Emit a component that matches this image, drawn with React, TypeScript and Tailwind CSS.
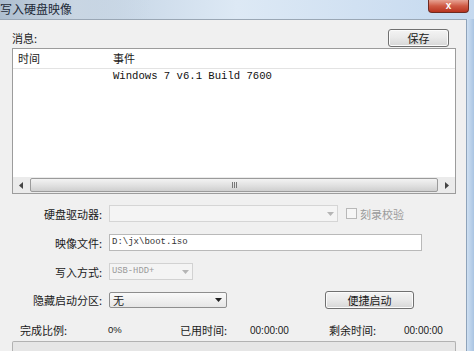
import React from "react";

const cjk = "font-['Noto_Sans_CJK_SC','Liberation_Sans',sans-serif]";
const mono = "font-['Liberation_Mono','DejaVu_Sans_Mono',monospace]";

function Arrow({ color = "#333" }: { color?: string }) {
  return (
    <svg width="7" height="4" viewBox="0 0 7 4">
      <path d="M0 0 L7 0 L3.5 4 Z" fill={color} />
    </svg>
  );
}

function WinButton({ label, w }: { label: string; w: string }) {
  return (
    <div
      className={`${w} h-[18px] flex items-center justify-center rounded-[3px] border border-[#707070] bg-gradient-to-b from-[#f4f4f4] via-[#e9e9e9] to-[#d6d6d6] text-[11px] text-[#1a1a1a] shadow-[inset_0_0_0_1px_#fbfbfb]`}
    >
      {label}
    </div>
  );
}

export default function App() {
  return (
    <div
      className={`w-[474px] h-[351px] overflow-hidden flex flex-col bg-[#f0f0f0] ${cjk} text-[11px] text-[#1a1a1a]`}
    >
      {/* Title bar */}
      <div className="relative h-[19px] shrink-0 bg-gradient-to-r from-[#b4c6d9] via-[#dde9f5] to-[#c5d9ef]">
        <div className="absolute left-0 top-0 w-[150px] h-[19px] bg-gradient-to-r from-[#aebfd0] via-[#c9d6e3] to-transparent" />
        <div className="relative ml-0 leading-[18px] text-[12px] text-[#1e2b38]">
          写入硬盘映像
        </div>
        <div className="absolute right-[5px] top-0 w-[41px] h-[13px] rounded-b-[4px] border border-t-0 border-[#6e2a20] bg-gradient-to-b from-[#e6a293] via-[#cf5a44] to-[#b8331f] flex items-center justify-center">
          <span className="text-white text-[10px] leading-none font-bold font-['Liberation_Sans',sans-serif]">
            x
          </span>
        </div>
      </div>

      <div className="flex flex-1 min-h-0">
        {/* Client area */}
        <div className="flex-1 flex flex-col border-t border-[#9aa7b5]">
          <div className="mt-[9px] h-[18px] flex items-center">
            <span className="ml-[12px]">消息:</span>
            <div className="ml-auto mr-[17px]">
              <WinButton label="保存" w="w-[61px]" />
            </div>
          </div>

          {/* List view */}
          <div className="mt-[1px] ml-[12px] w-[444px] h-[154px] border border-[#9c9c9c] bg-white flex flex-col">
            <div className="h-[20px] flex items-center border-b border-[#e3e3e3] shrink-0">
              <span className="w-[100px] pl-[5px]">时间</span>
              <span>事件</span>
            </div>
            <div className="h-[16px] flex items-center shrink-0">
              <span className="w-[100px]" />
              <span className={`${mono} text-[10.6px] text-[#111]`}>
                Windows 7 v6.1 Build 7600
              </span>
            </div>
            <div className="flex-1" />
            {/* Horizontal scrollbar */}
            <div className="h-[16px] flex items-center bg-[#ebebeb] shrink-0">
              <div className="w-[16px] h-[16px] flex items-center justify-center">
                <svg width="4" height="7" viewBox="0 0 4 7">
                  <path d="M4 0 L4 7 L0 3.5 Z" fill="#444" />
                </svg>
              </div>
              <div className="flex-1 h-[16px] flex items-center px-[1px]">
                <div className="w-full h-[14px] rounded-[2px] border border-[#9b9b9b] bg-gradient-to-b from-[#f3f3f3] via-[#e2e2e2] to-[#cfcfcf] flex items-center justify-center">
                  <div className="flex gap-[1px]">
                    <div className="w-[1px] h-[6px] bg-[#777]" />
                    <div className="w-[1px] h-[6px] bg-[#777]" />
                    <div className="w-[1px] h-[6px] bg-[#777]" />
                  </div>
                </div>
              </div>
              <div className="w-[16px] h-[16px] flex items-center justify-center">
                <svg width="4" height="7" viewBox="0 0 4 7">
                  <path d="M0 0 L0 7 L4 3.5 Z" fill="#444" />
                </svg>
              </div>
            </div>
          </div>

          {/* Row 1: disk drive */}
          <div className="mt-[11px] h-[17px] flex items-center">
            <span className="w-[102px] text-right">硬盘驱动器:</span>
            <div className="ml-[7px] w-[229px] h-[17px] border border-[#d5d5d5] bg-[#f4f4f4] flex items-center justify-end pr-[3px]">
              <Arrow color="#b5b5b5" />
            </div>
            <div className="ml-[8px] w-[11px] h-[11px] border border-[#b8b8b8] bg-[#f6f6f6]" />
            <span className="ml-[3px] text-[#9a9a9a]">刻录校验</span>
          </div>

          {/* Row 2: image file */}
          <div className="mt-[12px] h-[17px] flex items-center">
            <span className="w-[102px] text-right">映像文件:</span>
            <div className="ml-[7px] w-[313px] h-[17px] border border-[#b9b9b9] bg-white flex items-center pl-[2px]">
              <span className={`${mono} text-[9px] text-[#333]`}>D:\jx\boot.iso</span>
            </div>
          </div>

          {/* Row 3: write mode */}
          <div className="mt-[12px] h-[17px] flex items-center">
            <span className="w-[102px] text-right">写入方式:</span>
            <div className="ml-[7px] w-[84px] h-[17px] border border-[#d2d2d2] bg-[#f4f4f4] flex items-center justify-between pl-[2px] pr-[3px]">
              <span className={`${mono} text-[8.8px] text-[#9a9a9a]`}>USB-HDD+</span>
              <Arrow color="#b5b5b5" />
            </div>
          </div>

          {/* Row 4: hidden boot partition */}
          <div className="mt-[11px] h-[18px] flex items-center">
            <span className="w-[102px] text-right">隐藏启动分区:</span>
            <div className="ml-[7px] w-[118px] h-[16px] rounded-[2px] border border-[#8e8e8e] bg-gradient-to-b from-[#fafafa] to-[#e6e6e6] flex items-center justify-between pl-[3px] pr-[4px]">
              <span>无</span>
              <Arrow color="#222" />
            </div>
            <div className="ml-[98px]">
              <WinButton label="便捷启动" w="w-[89px]" />
            </div>
          </div>

          {/* Status row */}
          <div className="mt-[13px] h-[16px] flex items-center">
            <span className="ml-[20px] w-[88px]">完成比例:</span>
            <span className="w-[72px] text-[9.5px] font-['Liberation_Sans',sans-serif]">0%</span>
            <span className="w-[70px]">已用时间:</span>
            <span className="w-[79px] text-[10px] font-['Liberation_Sans',sans-serif]">00:00:00</span>
            <span className="w-[75px]">剩余时间:</span>
            <span className="text-[10px] font-['Liberation_Sans',sans-serif]">00:00:00</span>
          </div>

          {/* Progress bar top */}
          <div className="mt-[3px] ml-[12px] w-[444px] h-[10px] rounded-t-[2px] border border-b-0 border-[#b2b2b2] bg-[#e6e6e6]" />
        </div>

        {/* Right window frame */}
        <div className="w-[8px] shrink-0 border-l border-[#8ea3ba] bg-gradient-to-r from-[#cfe0f2] to-[#a9c4e2]" />
      </div>
    </div>
  );
}
